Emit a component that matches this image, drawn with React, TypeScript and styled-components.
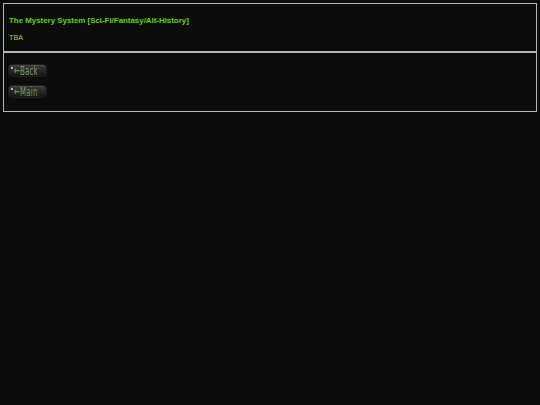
import styled, { createGlobalStyle } from 'styled-components';

const Global = createGlobalStyle`
  html, body {
    margin: 0;
    background: #0c0c0c;
  }
  body {
    padding: 3px;
    font-family: "Liberation Sans", Arial, sans-serif;
  }
`;

const Panel = styled.section<{ $gap?: number }>`
  border: 1px solid #b8b8b8;
  background: #0c0c0c;
  padding: 11px 5px 8px 5px;
  display: flex;
  flex-direction: column;
  gap: ${(p) => p.$gap ?? 0}px;
`;

const Title = styled.h1`
  margin: 0;
  font-size: 7.9px;
  font-weight: bold;
  color: #66d400;
  line-height: 11px;
`;

const Note = styled.p`
  margin: 7px 0 0 0;
  font-size: 7.2px;
  color: #9ad070;
  line-height: 10px;
`;

const NavButton = styled.a`
  position: relative;
  display: flex;
  align-items: center;
  width: 39px;
  height: 13px;
  border-radius: 4px;
  background: linear-gradient(#3c3c3c 0%, #282828 45%, #141414 100%);
  border: 1px solid #1e1e1e;
  box-shadow: inset 0 1px 0 #4a4a4a;
  padding-left: 5px;
  box-sizing: border-box;
  text-decoration: none;
  cursor: pointer;
  overflow: hidden;
`;

const Dot = styled.span`
  position: absolute;
  left: 2px;
  top: 2px;
  width: 2px;
  height: 2px;
  background: #e0e0e0;
  border-radius: 50%;
`;

const Label = styled.span`
  font-family: "DejaVu Sans Condensed", "Liberation Sans Narrow", sans-serif;
  font-size: 13px;
  color: #76a05e;
  line-height: 13px;
  transform: scaleX(0.6);
  transform-origin: left center;
  white-space: nowrap;
  letter-spacing: 0.3px;
`;

const Nav = styled(Panel)`
  padding: 11px 4px 13px 4px;
`;

export default function App() {
  return (
    <>
      <Global />
      <Panel>
        <Title>The Mystery System [Sci-Fi/Fantasy/Alt-History]</Title>
        <Note>TBA</Note>
      </Panel>
      <Nav $gap={8}>
        <NavButton>
          <Dot />
          <Label>←Back</Label>
        </NavButton>
        <NavButton>
          <Dot />
          <Label>←Main</Label>
        </NavButton>
      </Nav>
    </>
  );
}
